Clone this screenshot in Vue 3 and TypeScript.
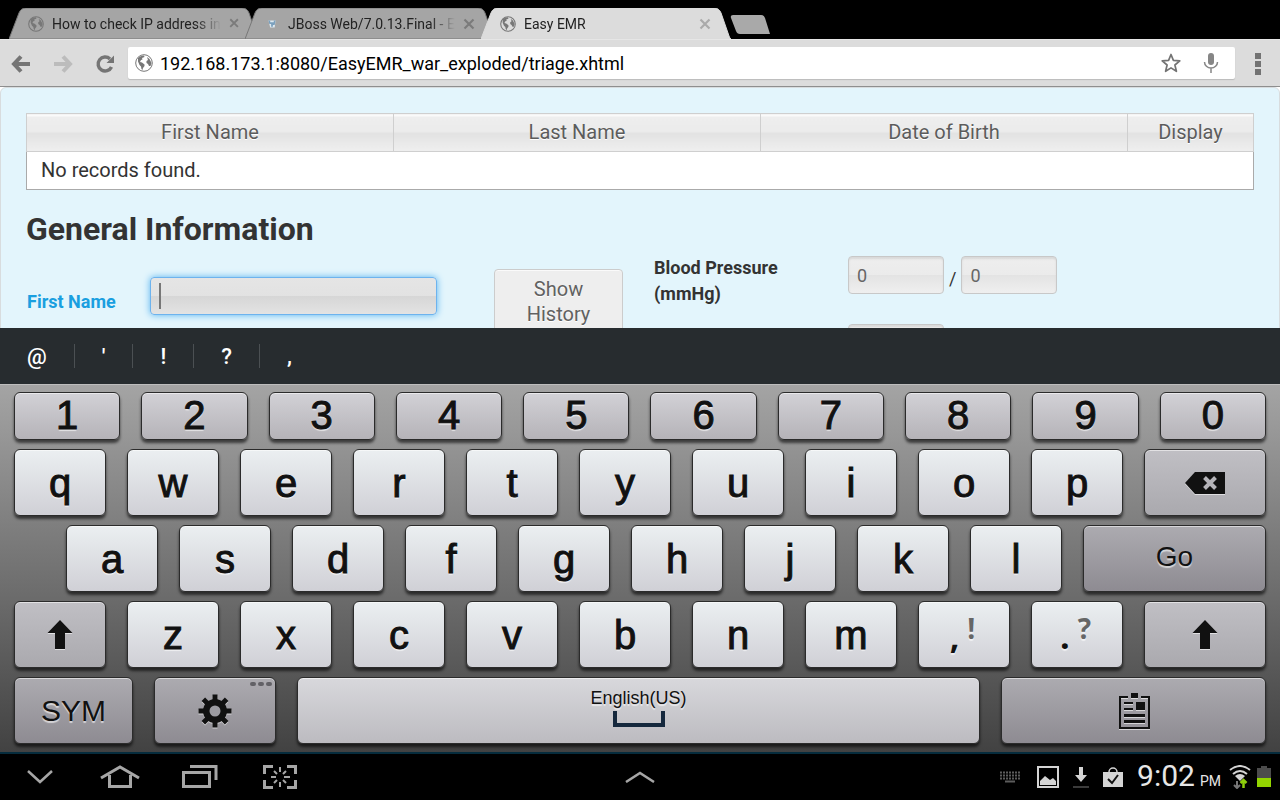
<script setup lang="ts">
import { ref } from 'vue'

interface Tab {
  title: string
  icon: 'globe' | 'jboss'
  active: boolean
}

interface Key {
  label: string
  kind: 'num' | 'letter' | 'func' | 'dark' | 'space'
  size: number
  icon?: 'backspace' | 'shift' | 'gear' | 'clipboard' | 'space'
  alt?: string
}

const tabs: Tab[] = [
  { title: 'How to check IP address in', icon: 'globe', active: false },
  { title: 'JBoss Web/7.0.13.Final - E', icon: 'jboss', active: false },
  { title: 'Easy EMR', icon: 'globe', active: true },
]

const url = ref('192.168.173.1:8080/EasyEMR_war_exploded/triage.xhtml')
const firstName = ref('')
const systolic = ref('0')
const diastolic = ref('0')
const temperature = ref('')

const columns = ['First Name', 'Last Name', 'Date of Birth', 'Display']
const suggestions = ['@', "'", '!', '?', ',']

// Outer key widths; the 2px of border is taken off before the rest is shared out.
const BORDER = 2

const letters = (text: string): Key[] =>
  text.split('').map((label) => ({ label, kind: 'letter', size: 92 }))

const rows: { name: string; keys: Key[] }[] = [
  { name: 'numbers', keys: '1234567890'.split('').map((label) => ({ label, kind: 'num', size: 106 })) },
  {
    name: 'upper',
    keys: [...letters('qwertyuiop'), { label: 'Backspace', kind: 'func', size: 122, icon: 'backspace' }],
  },
  { name: 'home', keys: [...letters('asdfghjkl'), { label: 'Go', kind: 'dark', size: 183 }] },
  {
    name: 'lower',
    keys: [
      { label: 'Shift', kind: 'func', size: 92, icon: 'shift' },
      ...letters('zxcvbnm'),
      { label: ',', kind: 'letter', size: 92, alt: '!' },
      { label: '.', kind: 'letter', size: 92, alt: '?' },
      { label: 'Shift', kind: 'func', size: 122, icon: 'shift' },
    ],
  },
  {
    name: 'bottom',
    keys: [
      { label: 'SYM', kind: 'dark', size: 119 },
      { label: 'Settings', kind: 'dark', size: 122, icon: 'gear' },
      { label: 'English(US)', kind: 'space', size: 683, icon: 'space' },
      { label: 'Clipboard', kind: 'dark', size: 265, icon: 'clipboard' },
    ],
  },
]
</script>

<template>
  <div class="device">
    <nav class="tabs" aria-label="Tabs">
      <div v-for="tab in tabs" :key="tab.title" class="tab" :class="{ active: tab.active }">
        <svg class="tab-shape" viewBox="0 0 251 31" preserveAspectRatio="none" aria-hidden="true">
          <path class="edge" d="M0 31 L10 5 Q12 0 17 0 L234 0 Q239 0 241 5 L249 28 Q250 31 251 31 Z" />
        </svg>
        <svg v-if="tab.icon === 'globe'" class="favicon" viewBox="0 0 18 18" aria-hidden="true">
          <circle cx="9" cy="9" r="8.200" fill="none" stroke="currentColor" stroke-width="1.200" />
          <path fill="currentColor" d="M3 4 Q5 1.500 9 1.500 L9.500 3 L7 4 L7.500 5.500 L6 6 L5 8 L7 8.500 L9.500 10.500 L9.500 12 L8 14 L7.500 16 Q6 15 6 12.500 L4.500 11 L3 7.500 Z M12 3 L14.500 5 L16.500 9 L15.500 12 L14 12 L13 10 L11.500 9 L11.500 7 L13 6 Z" />
        </svg>
        <svg v-else class="favicon" viewBox="0 0 18 18" aria-hidden="true">
          <path fill="#dce8f0" d="M5 5 H13 L12 13 H7 Z" />
          <path fill="#7ba0bd" d="M5 5 h2 v2 h4 V5 h2 l-1 5 h-2 v2 H8 v-3 H6 Z" />
        </svg>
        <button class="tab-title" type="button">{{ tab.title }}</button>
        <button class="close" type="button" aria-label="Close tab">
          <svg viewBox="0 0 12 12"><path d="M1.500 1.500 L10.500 10.500 M10.500 1.500 L1.500 10.500" fill="none" stroke="currentColor" stroke-width="2.200" /></svg>
        </button>
      </div>
      <button class="new-tab" type="button" aria-label="New tab">
        <svg viewBox="0 0 41 20"><path d="M3 0 H31 Q34 0 35 3 L40 19 H10 Q7 19 6 16 L1 3 Q0 0 3 0 Z" fill="#a9a9a9" /></svg>
      </button>
    </nav>

    <header class="toolbar">
      <button class="tool" type="button" aria-label="Back">
        <svg viewBox="0 0 20 20"><path d="M19 10 H4 M10 2.500 L3 10 L10 17.500" fill="none" stroke="#757575" stroke-width="4" /></svg>
      </button>
      <button class="tool" type="button" aria-label="Forward">
        <svg viewBox="0 0 20 20"><path d="M1 10 H16 M10 2.500 L17 10 L10 17.500" fill="none" stroke="#bcbcbc" stroke-width="4" /></svg>
      </button>
      <button class="tool" type="button" aria-label="Reload">
        <svg viewBox="0 0 20 20">
          <path d="M15 5 A7 7 0 1 0 16.500 13" fill="none" stroke="#757575" stroke-width="3.400" />
          <path d="M19 1.500 V9 H11.500 Z" fill="#757575" />
        </svg>
      </button>
      <div class="address">
        <svg class="site" viewBox="0 0 18 18" aria-hidden="true">
          <circle cx="9" cy="9" r="8.300" fill="none" stroke="currentColor" stroke-width="1" />
          <path fill="currentColor" d="M3 4 Q5 1.500 9 1.500 L9.500 3 L7 4 L7.500 5.500 L6 6 L5 8 L7 8.500 L9.500 10.500 L9.500 12 L8 14 L7.500 16 Q6 15 6 12.500 L4.500 11 L3 7.500 Z M12 3 L14.500 5 L16.500 9 L15.500 12 L14 12 L13 10 L11.500 9 L11.500 7 L13 6 Z" />
        </svg>
        <input v-model="url" class="url" type="text" aria-label="Address" />
        <button class="in-address" type="button" aria-label="Bookmark">
          <svg viewBox="0 0 20 20"><path d="M10 1.500 L12.400 7.400 L18.800 7.900 L13.900 12 L15.400 18.300 L10 14.900 L4.600 18.300 L6.100 12 L1.200 7.900 L7.600 7.400 Z" fill="none" stroke="#737373" stroke-width="1.700" stroke-linejoin="round" /></svg>
        </button>
        <button class="in-address" type="button" aria-label="Voice search">
          <svg viewBox="0 0 20 20">
            <rect x="7" y="0" width="6" height="12" rx="3" fill="#868686" />
            <path d="M3.500 9 A6.500 6 0 0 0 16.500 9 M10 15 V20" fill="none" stroke="#868686" stroke-width="1.500" />
          </svg>
        </button>
      </div>
      <button class="menu" type="button" aria-label="Menu">
        <svg viewBox="0 0 6 22"><path d="M0 0h6v6H0z M0 8h6v6H0z M0 16h6v6H0z" fill="#737373" /></svg>
      </button>
    </header>

    <main class="page">
      <div class="panel">
        <table class="records">
          <thead>
            <tr>
              <th v-for="column in columns" :key="column" scope="col">{{ column }}</th>
            </tr>
          </thead>
          <tbody>
            <tr>
              <td colspan="4">No records found.</td>
            </tr>
          </tbody>
        </table>
        <h1>General Information</h1>
        <form class="form" @submit.prevent>
          <label class="first-label" for="first-name">First Name</label>
          <div class="first-field">
            <input id="first-name" v-model="firstName" class="field focused" type="text" />
          </div>
          <div class="history">
            <button type="button">Show History</button>
          </div>
          <label class="vital-label" for="systolic">Blood Pressure (mmHg)</label>
          <div class="vitals">
            <div class="pair">
              <input id="systolic" v-model="systolic" class="field" type="text" />
              <span>/</span>
              <input v-model="diastolic" class="field" type="text" aria-label="Diastolic pressure" />
            </div>
            <input v-model="temperature" class="field" type="text" aria-label="Temperature" />
          </div>
        </form>
      </div>
    </main>

    <div class="suggestions">
      <button v-for="mark in suggestions" :key="mark" type="button">{{ mark }}</button>
    </div>

    <section class="keyboard" aria-label="Keyboard">
      <div v-for="row in rows" :key="row.name" class="row" :class="row.name">
        <button
          v-for="(key, i) in row.keys"
          :key="i"
          type="button"
          class="key"
          :class="[key.kind, { word: key.label === 'SYM', go: key.label === 'Go' }]"
          :style="{ flexGrow: key.size - BORDER }"
          :aria-label="key.label"
        >
          <svg v-if="key.icon === 'backspace'" class="glyph" width="40" height="22" viewBox="0 0 40 22">
            <path d="M0 11 L10 0 H40 V22 H10 Z" fill="#111" />
            <path d="M19.500 5.500 L30.500 16.500 M30.500 5.500 L19.500 16.500" stroke="#b5b4b9" stroke-width="4" />
          </svg>
          <svg v-else-if="key.icon === 'shift'" class="glyph" width="26" height="30" viewBox="0 0 26 30">
            <path d="M13 0 L25.500 13 H18 V29 H8 V13 H0.500 Z" fill="#111" />
          </svg>
          <template v-else-if="key.icon === 'gear'">
            <svg class="glyph" width="34" height="34" viewBox="-17 -17 34 34">
              <g fill="#111">
                <rect v-for="n in 4" :key="n" x="-2.500" y="-16.500" width="5" height="33" :transform="`rotate(${n * 45})`" />
                <circle r="12" />
              </g>
              <circle r="5.500" fill="#9c9ba1" />
            </svg>
            <span class="dots"><i></i><i></i><i></i></span>
          </template>
          <svg v-else-if="key.icon === 'clipboard'" class="glyph" width="32" height="36" viewBox="0 0 32 36">
            <path d="M10 4 H2 V35 H31 V4 H23" fill="none" stroke="#111" stroke-width="2" />
            <path d="M13 0h7v5h-7z M6 9h9v2H6z M18 9h9v8h-9z M6 15h9v2H6z M6 21h21v3H6z M6 27h21v3H6z" fill="#111" />
          </svg>
          <template v-else-if="key.icon === 'space'">
            <span class="language">{{ key.label }}</span>
            <svg width="52" height="16" viewBox="0 0 52 16"><path d="M2 0 V14 H50 V0" fill="none" stroke="#15283d" stroke-width="4" /></svg>
          </template>
          <template v-else-if="key.alt">
            <span class="mark">{{ key.label }}</span>
            <span class="alt">{{ key.alt }}</span>
          </template>
          <template v-else>{{ key.label }}</template>
        </button>
      </div>
    </section>

    <footer class="system">
      <div class="buttons">
        <button type="button" aria-label="Hide keyboard">
          <svg width="26" height="14" viewBox="0 0 26 14"><path d="M1 1 L13 12 L25 1" fill="none" stroke="#a6a6a6" stroke-width="2.500" /></svg>
        </button>
        <button type="button" aria-label="Home">
          <svg width="40" height="24" viewBox="0 0 40 24">
            <path d="M1 13 L20 2 L39 13" fill="none" stroke="#a6a6a6" stroke-width="3" />
            <path d="M9.500 10 V21.500 H30.500 V10" fill="none" stroke="#a6a6a6" stroke-width="3" />
          </svg>
        </button>
        <button type="button" aria-label="Recent apps">
          <svg width="36" height="24" viewBox="0 0 36 24">
            <path d="M8 1.500 H34 V15" fill="none" stroke="#a6a6a6" stroke-width="3" />
            <path d="M1.500 7.500 H27.500 V21.500 H1.500 Z" fill="none" stroke="#a6a6a6" stroke-width="3" />
          </svg>
        </button>
        <button type="button" aria-label="Screenshot">
          <svg width="34" height="24" viewBox="0 0 34 24">
            <path d="M1.500 9 V1.500 H10 M24 1.500 H32.500 V9 M32.500 15 V22.500 H24 M10 22.500 H1.500 V15" fill="none" stroke="#a6a6a6" stroke-width="3" />
            <path d="M17 2 V7 M17 17 V22 M8 12 H13 M21 12 H27 M11 6 L14 9 M23 6 L20 9 M11 18 L14 15 M23 18 L20 15" stroke="#a6a6a6" stroke-width="2" />
          </svg>
        </button>
      </div>
      <button class="tray" type="button" aria-label="Open tray">
        <svg width="30" height="12" viewBox="0 0 30 12"><path d="M1 11 L15 2 L29 11" fill="none" stroke="#a6a6a6" stroke-width="2.500" /></svg>
      </button>
      <div class="status">
        <svg class="keys-icon" width="20" height="12" viewBox="0 0 20 12">
          <path d="M0 1.500 H20 M0 4.500 H20 M0 7.500 H20" stroke="#5c5c5c" stroke-width="2" stroke-dasharray="2 1" />
          <path d="M5 10.500 H15" stroke="#5c5c5c" stroke-width="2" />
        </svg>
        <svg width="22" height="22" viewBox="0 0 22 22">
          <rect x="1" y="1" width="20" height="20" fill="none" stroke="#d4d4d4" stroke-width="2" />
          <path d="M3 19 V15 L8 10 L13 14 L16 12 L19 15 V19 Z" fill="#d4d4d4" />
        </svg>
        <svg width="16" height="22" viewBox="0 0 16 22">
          <path d="M6 1 H10 V9 H14 L8 16 L2 9 H6 Z" fill="#d4d4d4" />
          <path d="M0 21 H16" stroke="#3b3b3b" stroke-width="2" />
        </svg>
        <svg class="bag" width="20" height="21" viewBox="0 0 20 21">
          <path d="M6 7 V5 A4 4 0 0 1 14 5 V7" fill="none" stroke="#d4d4d4" stroke-width="1.500" />
          <rect y="5" width="20" height="15" fill="#d4d4d4" />
          <path d="M5 12 L9 16 L15 8" fill="none" stroke="#111" stroke-width="2" />
        </svg>
        <time class="clock">9:02<small>PM</small></time>
        <svg width="22" height="24" viewBox="0 0 22 24">
          <path d="M1 5 Q11 -3 21 5 M4 9 Q11 3 18 9" fill="none" stroke="#d4d4d4" stroke-width="2" />
          <path d="M6 11 Q11 7 16 11 L11 16 Z" fill="#d4d4d4" />
          <path d="M8 16 V23 M5 20 L8 23 L11 20" fill="none" stroke="#777" stroke-width="2" />
          <path d="M14.500 23 V15 M11.500 18 L14.500 15 L17.500 18" fill="none" stroke="#8fce0c" stroke-width="2.500" />
        </svg>
        <svg width="14" height="22" viewBox="0 0 14 22">
          <path d="M4 0 H10 V2 H14 V12 H0 V2 H4 Z" fill="#4c4c4c" />
          <path d="M0 12 H14 V21 H0 Z" fill="#93d500" />
        </svg>
      </div>
    </footer>
  </div>
</template>

<style>
body {
  background: #000;
}
</style>

<style scoped>
.device {
  display: flex;
  flex-direction: column;
  height: 100vh;
  overflow: hidden;
  font-family: Roboto, 'Open Sans', sans-serif;
}
button {
  padding: 0;
  border: 0;
  background: none;
  font: inherit;
  color: inherit;
}
svg {
  display: block;
}

/* tab strip */
.tabs {
  display: flex;
  align-items: flex-end;
  height: 39px;
  padding-left: 9px;
  background: #000;
}
.tab {
  position: relative;
  display: flex;
  align-items: center;
  width: 250px;
  height: 31px;
  margin-right: -14px;
  padding: 0 20px 0 19px;
  box-sizing: border-box;
  color: #222;
}
.tab-shape {
  position: absolute;
  inset: 0;
  width: 100%;
  height: 100%;
}
.edge {
  fill: #a5a5a5;
  stroke: #777;
  stroke-width: 1;
}
.active .edge {
  fill: #dcdcdc;
  stroke: #dcdcdc;
}
.favicon {
  position: relative;
  flex: none;
  width: 16px;
  height: 16px;
  margin-right: 8px;
  color: #777;
}
.tab-title {
  position: relative;
  flex: 1;
  white-space: nowrap;
  text-align: left;
  font-size: 14px;
  line-height: 20px;
  mask-image: linear-gradient(to right, #000 85%, transparent);
}
.close {
  position: relative;
  width: 12px;
  height: 12px;
  margin-left: 8px;
  color: #7b7b7b;
}
.active .close {
  color: #aaa;
}
.new-tab {
  width: 41px;
  height: 20px;
  margin: 0 0 4px 13px;
}

/* toolbar */
.toolbar {
  display: flex;
  align-items: center;
  height: 48px;
  box-sizing: border-box;
  background: #dcdcdc;
  border-top: 1px solid #e6e6e6;
  border-bottom: 1px solid #8e8e8e;
}
.tool {
  display: flex;
  justify-content: center;
  width: 42px;
  padding-top: 2px;
}
.tool svg {
  width: 20px;
  height: 20px;
}
.address {
  display: flex;
  flex: 1;
  align-items: center;
  height: 32px;
  margin-left: 2px;
  padding: 0 14px 0 7px;
  background: #fff;
  border-radius: 2px;
  box-shadow: 0 1px 1px #bbb;
}
.site {
  flex: none;
  width: 18px;
  height: 18px;
  color: #777;
}
.url {
  flex: 1;
  min-width: 0;
  margin-left: 7px;
  padding: 2px 0 0;
  border: 0;
  outline: 0;
  background: none;
  font: 18px/24px Roboto, sans-serif;
  color: #000;
}
.in-address {
  width: 20px;
  margin-left: 20px;
}
.in-address svg {
  width: 20px;
  height: 20px;
}
.menu {
  display: flex;
  justify-content: center;
  width: 45px;
  padding-top: 2px;
}
.menu svg {
  width: 6px;
  height: 22px;
}

/* web page */
.page {
  flex: 1;
  min-height: 0;
  overflow: hidden;
  background: #fff;
}
.panel {
  min-height: 400px;
  padding: 25px;
  background: #e3f5fc;
  border: 1px solid #d8dcde;
  border-radius: 6px;
}
.records {
  width: 100%;
  border-collapse: collapse;
  table-layout: fixed;
  font-size: 20px;
  line-height: 24px;
}
.records th {
  height: 38px;
  padding: 0 0 2px;
  box-sizing: border-box;
  border: 1px solid #cfcfcf;
  background: linear-gradient(#fafafa 0 2px, #eee 2px, #ebebeb 50%, #e2e2e2 50%, #efefef);
  color: #5c5c5c;
  font-weight: 400;
  text-shadow: 0 1px 0 #fff;
}
.records th:last-child {
  width: 126px;
}
.records td {
  height: 38px;
  padding: 0 14px 2px;
  box-sizing: border-box;
  border: 1px solid #aaa;
  border-top-color: #cfcfcf;
  background: #fff;
  color: #333;
}
h1 {
  margin: 21px 0 0;
  font-size: 32px;
  line-height: 36px;
  font-weight: 700;
  color: #333;
}
.form {
  display: grid;
  grid-template-columns: 124fr 344fr 160fr 194fr 406fr;
  align-items: start;
  margin-top: 8px;
  color: #333;
  font-size: 18px;
  line-height: 26px;
}
.first-label {
  margin: 34px 0 0 1px;
  color: #1a9fe0;
  font-weight: 700;
}
.vital-label {
  width: 150px;
  font-weight: 700;
}
.field {
  width: 96px;
  height: 38px;
  padding: 0 8px;
  box-sizing: border-box;
  border: 1px solid #c8c8c8;
  border-radius: 4px;
  outline: 0;
  background: linear-gradient(#eee, #ebebeb 50%, #e3e3e3 50%, #efefef);
  box-shadow: inset 0 2px 2px #d8d8d8;
  font: 18px/24px Roboto, sans-serif;
  color: #666;
}
.first-field {
  padding: 22px 57px 0 0;
}
.field.focused {
  display: block;
  width: 100%;
  border-color: #6db3ee;
  background:
    linear-gradient(#777, #777) 8px center / 2px 26px no-repeat,
    linear-gradient(#e5e5e5, #e2e2e2 50%, #d6d6d6 50%, #e3e3e3);
  box-shadow: 0 0 7px #58b4f0;
}
.history {
  padding-top: 14px;
}
.history button {
  width: 129px;
  height: 66px;
  padding: 0 24px;
  border: 1px solid #ccc;
  border-radius: 4px;
  background: #eee;
  box-shadow: inset 0 1px 0 #fafafa;
  color: #616161;
  font-size: 20px;
  line-height: 25px;
  text-shadow: 0 1px 0 #fff;
}
.vitals {
  display: flex;
  flex-direction: column;
  gap: 30px;
  padding-top: 1px;
}
.pair {
  display: flex;
  align-items: center;
  gap: 5px;
}
.pair span {
  padding-top: 8px;
}

/* suggestion strip */
.suggestions {
  display: flex;
  align-items: center;
  height: 56px;
  background: #272c2f;
  color: #fff;
  font-size: 22px;
  font-weight: 500;
}
.suggestions button {
  height: 24px;
  padding: 0 27px;
  border-right: 1px solid #4b5053;
  line-height: 26px;
}
.suggestions button:last-child {
  border-right: 0;
}

/* keyboard */
.keyboard {
  display: flex;
  flex-direction: column;
  gap: 9px;
  padding: 7px 14px 8px;
  background: linear-gradient(#a4a4a4, #424242);
  border-top: 1px solid #bdbdbd;
}
.row {
  display: flex;
  gap: 21px;
  height: 67px;
}
.row.numbers {
  height: 48px;
}
.row.home {
  padding-left: 52px;
}
.key {
  position: relative;
  display: flex;
  flex: 1 1 0;
  align-items: center;
  justify-content: center;
  min-width: 0;
  box-sizing: border-box;
  border: 1px solid #2b2b2b;
  border-radius: 6px;
  box-shadow: 0 3px 3px #0009, inset 0 1px 0 #fff8;
  color: #111;
  font-family: 'Liberation Sans', sans-serif;
  font-size: 40px;
  line-height: 44px;
  text-shadow: 0 2px 1px #fff9;
}
.letter {
  background: linear-gradient(#ebeff1, #d0d0d6);
  -webkit-text-stroke: 1px #111;
}
.num {
  padding-bottom: 2px;
  background: linear-gradient(#d2d1d6, #b5b3b8);
  -webkit-text-stroke: 1px #111;
}
.func {
  background: linear-gradient(#c0bfc4, #aaa9ae);
}
.dark {
  background: linear-gradient(#acabb0, #8e8b92);
}
.space {
  flex-direction: column;
  gap: 1px;
  padding-bottom: 8px;
  background: linear-gradient(#d8d8dc, #bcbbc0);
}
.word {
  font-size: 30px;
}
.go {
  padding-bottom: 4px;
  font-size: 28px;
}
.glyph {
  filter: drop-shadow(0 1px 0 #fff9);
}
.language {
  font-size: 18px;
  line-height: 24px;
}
.mark {
  padding: 2px 8px 0 0;
  font: 700 34px/44px 'Open Sans', sans-serif;
  -webkit-text-stroke: 0;
}
.alt {
  padding: 0 3px 14px 0;
  color: #666;
  font: 700 28px/30px 'Open Sans', sans-serif;
  -webkit-text-stroke: 0;
}
.dots {
  position: absolute;
  top: 4px;
  right: 3px;
  display: flex;
  gap: 2px;
}
.dots i {
  width: 6px;
  height: 4px;
  border-radius: 2px;
  background: #626166;
}

/* system bar */
.system {
  display: grid;
  grid-template-columns: 1fr auto 1fr;
  align-items: center;
  height: 48px;
  box-sizing: border-box;
  border-top: 2px solid #062c3d;
  background: #000;
}
.buttons {
  display: flex;
}
.buttons button {
  display: flex;
  align-items: center;
  justify-content: center;
  width: 80px;
  height: 46px;
}
.status {
  display: flex;
  align-items: center;
  justify-content: flex-end;
  gap: 14px;
  padding-right: 9px;
  color: #e6e6e6;
}
.keys-icon {
  margin-right: 3px;
}
.clock {
  display: flex;
  align-items: baseline;
  gap: 5px;
  margin-right: -6px;
  padding-top: 2px;
  font-size: 30px;
  line-height: 36px;
}
.clock small {
  font-size: 14px;
}
.status svg:last-child {
  margin-left: -8px;
}
</style>
